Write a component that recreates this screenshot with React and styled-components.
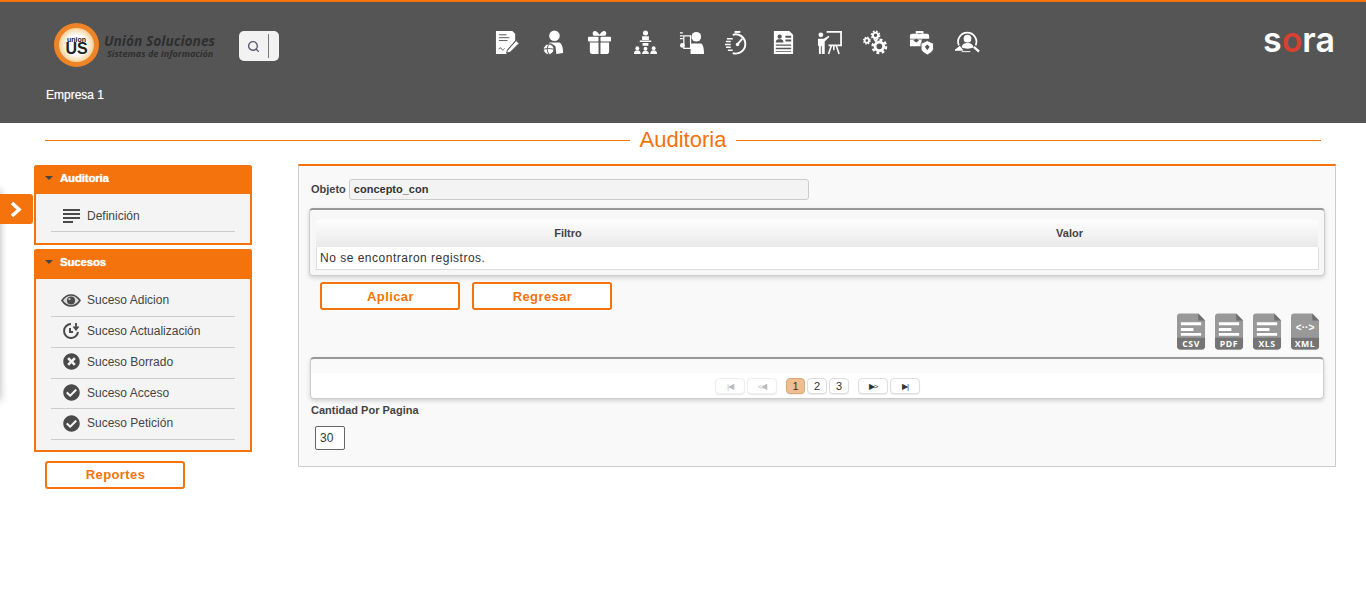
import React from 'react'
import styled, { createGlobalStyle } from 'styled-components'
import { FaCheckCircle, FaTimesCircle } from 'react-icons/fa'
import { Search } from 'lucide-react'

const orange = '#f4730d'

const GlobalStyle = createGlobalStyle`
  html, body {
    margin: 0;
    padding: 0;
    background: #fff;
    font-family: "Liberation Sans", Arial, sans-serif;
    overflow: hidden;
  }
`

const Page = styled.div`
  position: relative;
  width: 1366px;
  height: 612px;
  overflow: hidden;
`

const Header = styled.header`
  height: 121px;
  background: #555;
  border-top: 2px solid ${orange};
`

const HeaderTop = styled.div`
  display: flex;
  align-items: flex-start;
  height: 80px;
  padding: 0 31px 0 54px;
`

const Logo = styled.div`
  display: flex;
  align-items: center;
  width: 185px;
  height: 44px;
  margin-top: 21px;
`

const LogoBadge = styled.div`
  display: flex;
  flex: none;
  flex-direction: column;
  align-items: center;
  justify-content: center;
  width: 45px;
  height: 44px;
  box-sizing: border-box;
  border-radius: 50%;
  border: 5px solid #ee8427;
  background: radial-gradient(circle, #fff 40%, #f5cf94 72%, #fff 88%);
  color: #222;
  font-weight: bold;
  font-size: 16px;
  line-height: 12px;

  small {
    font-size: 7px;
    line-height: 7px;
  }
`

const LogoText = styled.div`
  margin: 2px 0 0 5px;
  color: #2f2f2f;
  font-family: "Open Sans", sans-serif;
  font-style: italic;
  font-weight: 700;
  font-size: 13.8px;
  line-height: 15px;
  white-space: nowrap;

  small {
    display: block;
    margin-left: 3px;
    font-size: 9.1px;
    line-height: 11px;
  }
`

const SearchBox = styled.div`
  display: flex;
  align-items: center;
  width: 40px;
  height: 30px;
  margin-top: 29px;
  box-sizing: border-box;
  padding-left: 8px;
  background: #f2f2f2;
  border-radius: 5px;
  color: #556;

  i {
    width: 1px;
    height: 24px;
    margin-left: 8px;
    background: #777;
  }
`

const IconNav = styled.nav`
  display: flex;
  margin-left: 205px;
  margin-top: 28px;
`

const NavSlot = styled.div`
  display: flex;
  justify-content: center;
  width: 46px;
  height: 28px;
`

const SoraMark = styled.svg`
  margin-left: auto;
  margin-top: 12px;
`

const CompanyName = styled.div`
  padding-left: 46px;
  margin-top: 6px;
  color: #fff;
  font-size: 12px;
  line-height: 14px;
  text-shadow: 0 0 1px rgba(255, 255, 255, 0.5);
`

const TitleRow = styled.div`
  display: flex;
  align-items: center;
  height: 35px;
  margin: 0 45px 6px;

  &::before, &::after {
    content: '';
    flex: 1;
    height: 1px;
    background: ${orange};
  }

  h1 {
    margin: 0 10px;
    color: ${orange};
    font-size: 22px;
    font-weight: normal;
    line-height: 33px;
    padding-bottom: 2px;
  }
`

const Content = styled.div`
  display: flex;
  align-items: flex-start;
  padding-left: 34px;
`

const Sidebar = styled.aside`
  width: 218px;
  margin-top: 1px;
  margin-right: 46px;
`

const MenuPanel = styled.section`
  box-sizing: border-box;
  margin-bottom: 4px;
  border: 2px solid ${orange};
  border-top: 0;
  border-radius: 3px 3px 0 0;
  background: #f4f4f4;
`

const MenuHead = styled.div`
  display: flex;
  align-items: center;
  height: ${p => p.$h}px;
  box-sizing: border-box;
  margin: 0 -2px;
  padding: 0 0 3px 11px;
  border-radius: 3px 3px 0 0;
  background: ${orange};
  color: #fff;
  font-size: 11.5px;
  font-weight: bold;
  letter-spacing: -0.2px;
  text-shadow: 0 0 1px #fff;

  &::before {
    content: '';
    width: 0;
    height: 0;
    margin-right: 7px;
    border-left: 4px solid transparent;
    border-right: 4px solid transparent;
    border-top: 4px solid #444;
  }
`

const MenuList = styled.div`
  padding: 7.7px 15px 10.3px;
`

const MenuRow = styled.div`
  display: flex;
  align-items: center;
  height: 30.75px;
  box-sizing: border-box;
  padding-bottom: 2px;
  border-bottom: 1px solid #ccc;
  color: #444;
  font-size: 12px;
`

const MenuIcon = styled.span`
  display: flex;
  justify-content: center;
  align-items: center;
  box-sizing: border-box;
  width: 36px;
  height: 18px;
  padding-left: 4px;
  color: #4a4a4a;
  font-size: 17px;
`

const OutlineButton = styled.button`
  width: 140px;
  height: 28px;
  padding: 0 0 0 1px;
  background: #fff;
  border: 2px solid ${orange};
  border-radius: 3px;
  color: ${orange};
  font-family: inherit;
  font-size: 13px;
  font-weight: bold;
  letter-spacing: 0.4px;
`

const ReportButton = styled(OutlineButton)`
  display: block;
  margin: 8.5px 0 0 11px;
`

const MainPanel = styled.main`
  width: 1038px;
  box-sizing: border-box;
  padding: 13px 10px 16px;
  background: #f9f9f9;
  border: 1px solid #ccc;
  border-top: 2px solid ${orange};
`

const FieldRow = styled.div`
  display: flex;
  align-items: center;
  padding-left: 2px;
`

const FieldLabel = styled.label`
  margin-right: 3px;
  padding-bottom: 1px;
  color: #444;
  font-size: 11px;
  font-weight: bold;
`

const ReadOnlyInput = styled.div`
  display: flex;
  align-items: center;
  width: 460px;
  height: 21px;
  box-sizing: border-box;
  padding: 0 0 1px 4px;
  background: #f3f3f3;
  border: 1px solid #ccc;
  border-radius: 3px;
  color: #333;
  font-size: 11px;
  font-weight: bold;
`

const GridBox = styled.div`
  box-sizing: border-box;
  height: ${p => p.$h}px;
  margin: ${p => p.$m};
  padding: ${p => p.$pad};
  background: linear-gradient(#fafafa 14px, #fff 14px);
  border: 1px solid #ccc;
  border-top: 2px solid #999;
  border-radius: 4px;
  box-shadow: 0 2px 4px rgba(0, 0, 0, 0.16);
`

const FilterBox = styled(GridBox)`
  background: #f7f7f7;
`

const GridHead = styled.div`
  display: grid;
  grid-template-columns: 504px 499px;
  height: 27px;
  background: linear-gradient(#fdfdfd, #e9e9e9);
  color: #444;
  font-size: 11px;
  font-weight: bold;

  span {
    display: flex;
    align-items: center;
    justify-content: center;
    padding-bottom: 2px;
  }
`

const GridEmpty = styled.div`
  display: flex;
  align-items: center;
  width: 1003px;
  height: 23px;
  box-sizing: border-box;
  padding-left: 3px;
  background: #fff;
  border: 1px solid #ddd;
  border-top: 0;
  color: #333;
  font-size: 12px;
  letter-spacing: 0.5px;
`

const ButtonRow = styled.div`
  display: flex;
  gap: 12px;
  margin: 6px 0 0 11px;
`

const ExportRow = styled.div`
  display: flex;
  justify-content: flex-end;
  gap: 9px;
  height: 37px;
  margin: 3px 5px 0 0;
`

const Pager = styled.div`
  display: flex;
  align-items: flex-start;
  padding: 19px 0 0 404px;
`

const PageButton = styled.div`
  display: flex;
  align-items: center;
  justify-content: center;
  width: ${p => p.$w}px;
  height: 16px;
  margin-left: ${p => p.$gap}px;
  box-sizing: border-box;
  background: ${p => (p.$active ? '#f0bd8f' : '#fff')};
  border: 1px solid ${p => (p.$active ? '#d9a878' : p.$off ? '#eee' : '#ddd')};
  border-radius: 4px;
  box-shadow: 0 1px 1px rgba(0, 0, 0, 0.08);
  color: ${p => (p.$off ? '#bbb' : '#333')};
  font-size: ${p => (p.$num ? 11 : 8)}px;
  letter-spacing: ${p => (p.$num ? 0 : -1)}px;
`

const SizeLabel = styled.div`
  margin: 5px 0 0 2px;
  color: #444;
  font-size: 11px;
  font-weight: bold;
  line-height: 12px;
`

const SizeInput = styled.div`
  display: flex;
  align-items: center;
  width: 30px;
  height: 24px;
  margin: 10px 0 0 6px;
  box-sizing: border-box;
  padding-left: 4px;
  background: #fff;
  border: 1px solid #666;
  border-radius: 2px;
  color: #333;
  font-size: 12px;
`

const SideTab = styled.div`
  position: absolute;
  left: 0;
  top: 194px;
  display: flex;
  align-items: center;
  justify-content: center;
  width: 33px;
  height: 30px;
  padding-right: 2px;
  box-sizing: border-box;
  background: ${orange};
  border-radius: 0 3px 3px 0;
`

const HiddenDrawer = styled.div`
  position: absolute;
  left: -200px;
  top: 190px;
  width: 200px;
  height: 210px;
  box-shadow: 0 0 8px rgba(0, 0, 0, 0.3);
`

const Ico = ({ children }) => (
  <svg width={25} height={25} viewBox='0 0 26 26' fill='#fff'>{children}</svg>
)

const dark = '#555'

const navIcons = [
  // documento con lapiz
  <Ico key='doc'>
    <path d='M1 1h17l3 3v7l-8 9-1 5H1z' />
    <path d='M4 5h8M4 8h11M4 11h9M4 20c1-2 2-2 3 0s2 0 3-1' stroke={dark} fill='none' strokeWidth='1' />
    <path d='M13 21l9-10 3 3-9 9-4 1z' stroke={dark} strokeWidth='1' />
  </Ico>,
  // persona con bola
  <Ico key='person'>
    <circle cx='14' cy='6' r='5.5' />
    <path d='M9 13h10c3 1 4 6 4 11l-7 1-1-8-4-3-3 0z' />
    <circle cx='8' cy='20' r='5.500' stroke={dark} strokeWidth='1' />
    <path d='M8 15c-2 3-2 7 0 10M3 20c3-1 6-1 10 0' stroke={dark} strokeWidth='1' fill='none' />
  </Ico>,
  // regalo
  <Ico key='gift'>
    <path d='M8 1c2 0 4 2 5 4 1-2 3-4 5-4s3 3 1 5H7C5 4 6 1 8 1z' />
    <rect x='1' y='7' width='11' height='5' rx='1' />
    <rect x='14' y='7' width='11' height='5' rx='1' />
    <path d='M3 13h9v12H5c-1 0-2-1-2-2zM14 13h9v10c0 1-1 2-2 2h-7z' />
  </Ico>,
  // presentador y audiencia
  <Ico key='speaker'>
    <circle cx='13' cy='3' r='2.600' />
    <path d='M9.500 6.500h7v4h-7zM7 11h12v1.500H7zM10 13.500h6v3h-6z' />
    <circle cx='4.500' cy='19' r='2' />
    <circle cx='13' cy='19.500' r='2' />
    <circle cx='21.500' cy='19' r='2' />
    <path d='M1 25c0-3 1.500-4 3.500-4S8 22 8 25zM9.500 25c0-2.500 1.500-3.500 3.500-3.500s3.500 1 3.500 3.500zM18 25c0-3 1.500-4 3.500-4s3.500 1 3.500 4z' />
  </Ico>,
  // persona con documento
  <Ico key='client'>
    <circle cx='18' cy='7' r='5' />
    <path d='M13 14h10c2 1 3 5 3 11H12V15z' />
    <path d='M5 6h7v13H5z' fill='none' stroke='#fff' strokeWidth='1.300' />
    <circle cx='3.500' cy='16' r='2.500' />
    <path d='M1 3h3M1 6h3M1 9h3' stroke='#fff' strokeWidth='1.300' />
  </Ico>,
  // cronometro
  <Ico key='watch'>
    <path d='M10 1h6v2h-6z' />
    <path d='M8 5a10 10 0 1 1 0 19' fill='none' stroke='#fff' strokeWidth='2' />
    <path d='M13 15l5-6' stroke='#fff' strokeWidth='2' />
    <path d='M2 9h6M1 12h5M0 15h6M1 18h5M3 21h5' stroke='#fff' strokeWidth='1.500' />
    <circle cx='13' cy='15' r='1.800' />
  </Ico>,
  // ficha
  <Ico key='sheet'>
    <path d='M3 1h16l4 4v20H3z' />
    <circle cx='9' cy='7' r='2.200' fill={dark} />
    <path d='M5 13c0-3 2-3.500 4-3.500s4 .5 4 3.500zM15 6h6v2h-6zM15 10h6v2h-6zM5 15h16v1.500H5zM5 18.500h16V20H5zM5 22h16v1H5z' fill={dark} />
  </Ico>,
  // pizarra
  <Ico key='board'>
    <circle cx='4' cy='5' r='2.500' />
    <path d='M1 9h6l5-3 1 1-5 5v13H5v-8H4v8H2v-8l-1-1z' />
    <path d='M10 2h15v14H12' fill='none' stroke='#fff' strokeWidth='1.800' />
    <path d='M15 16l-3 9M20 16l3 9M17.500 16v5' stroke='#fff' strokeWidth='1.600' />
  </Ico>,
  // engranajes
  <Ico key='gears'>
    <g fill='none' stroke='#fff'>
      <circle cx='17' cy='17' r='4.500' strokeWidth='3' />
      <circle cx='17' cy='17' r='7' strokeWidth='2.500' strokeDasharray='3 2.500' />
      <circle cx='13' cy='5.500' r='2.800' strokeWidth='2' />
      <circle cx='13' cy='5.500' r='4.300' strokeWidth='1.500' strokeDasharray='1.800 1.580' />
      <circle cx='4' cy='11' r='2.300' strokeWidth='1.800' />
      <circle cx='4' cy='11' r='3.500' strokeWidth='1.300' strokeDasharray='1.500 1.250' />
    </g>
  </Ico>,
  // maletin con escudo
  <Ico key='case'>
    <path d='M7 4V1h8v3h-2V3H9v1z' />
    <path d='M1 6c0-1 1-2 2-2h16c1 0 2 1 2 2v3H1z' />
    <path d='M1 10h13l-1 1v6H1z' />
    <path d='M7.500 9l3 2-3 2-3-2z' fill={dark} />
    <path d='M19 11l6.500 3v5c0 3-3 5-6.500 7-3.500-2-6.500-4-6.500-7v-5z' stroke={dark} strokeWidth='1' />
    <path d='M19 15l2.500 2.500L19 21l-2.500-3.500z' fill={dark} />
  </Ico>,
  // busqueda de persona
  <Ico key='audit'>
    <path d='M4 16a9.500 9.500 0 1 1 17.500 0' fill='none' stroke='#fff' strokeWidth='1.800' />
    <circle cx='13' cy='9' r='4' />
    <path d='M7 18c0-3 3-4.500 6-4.500s6 1.500 6 4.500c-3 2-9 2-12 0z' />
    <path d='M19.500 17.500l5.500 5' stroke='#fff' strokeWidth='2.500' />
    <path d='M0 21l5-4 3 4zM7 22.500h9' stroke='#fff' strokeWidth='1' />
  </Ico>,
]

const LinesIcon = () => (
  <svg width='17' height='14' viewBox='0 0 17 14' fill='#4a4a4a'>
    <path d='M0 0h17v2H0zM0 4h17v2H0zM0 8h17v2H0zM0 12h10v2H0z' />
  </svg>
)

const EyeIcon = () => (
  <svg width='20' height='13' viewBox='0 0 20 13'>
    <path d='M1 6.500C4 2 7 1 10 1s6 1 9 5.500C16 11 13 12 10 12S4 11 1 6.500z' fill='#d8d8d8' stroke='#4a4a4a' strokeWidth='1.600' />
    <circle cx='10' cy='6.500' r='4' fill='#4a4a4a' />
    <circle cx='8.500' cy='5' r='1.200' fill='#bbb' />
  </svg>
)

const ClockIcon = () => (
  <svg width='18' height='18' viewBox='0 0 18 18' fill='none' stroke='#4a4a4a' strokeWidth='2'>
    <path d='M9 2a7 7 0 1 0 7 8' />
    <path d='M8 6v4h3' />
    <path d='M14 1v6M11.500 4.500L14 7.500l2.500-3' strokeWidth='1.800' />
  </svg>
)

const ChevronIcon = () => (
  <svg width='12' height='17' viewBox='0 0 12 17' fill='none' stroke='#fff' strokeWidth='3.600'>
    <path d='M2 2l7 6.500L2 15' />
  </svg>
)

const FileIcon = ({ label, code }) => (
  <svg width='29' height='37' viewBox='0 0 30 37'>
    <path d='M3 0h19l7 7v27c0 1.600-1.400 3-3 3H3c-1.600 0-3-1.400-3-3V3c0-1.600 1.400-3 3-3z' fill='#999' />
    <path d='M22 0l7 7h-7z' fill='#6f6f6f' />
    <path d='M0 25h29v9c0 1.600-1.400 3-3 3H3c-1.600 0-3-1.400-3-3z' fill='#757575' />
    {code
      ? <text x='14.500' y='18' fill='#fff' fontFamily='"Liberation Sans", sans-serif' fontSize='10.500' fontWeight='bold' textAnchor='middle'>{'<··>'}</text>
      : <path d='M4 9h21v3H4zM4 15h13v3H4zM4 20h21v3H4z' fill='#fff' />}
    <text x='14.500' y='34.500' fill='#fff' fontFamily='"Open Sans", sans-serif' fontSize='9' fontWeight='bold' textAnchor='middle' letterSpacing='0.6'>{label}</text>
  </svg>
)

const menus = [
  { title: 'Auditoria', headHeight: 29, items: [{ icon: <LinesIcon />, label: 'Definición' }] },
  {
    title: 'Sucesos',
    headHeight: 30,
    items: [
      { icon: <EyeIcon />, label: 'Suceso Adicion' },
      { icon: <ClockIcon />, label: 'Suceso Actualización' },
      { icon: <FaTimesCircle />, label: 'Suceso Borrado' },
      { icon: <FaCheckCircle />, label: 'Suceso Acceso' },
      { icon: <FaCheckCircle />, label: 'Suceso Petición' },
    ],
  },
]

const pages = [
  { label: '|◀', w: 30, gap: 0, off: true },
  { label: '<◀', w: 30, gap: 2, off: true },
  { label: '1', w: 19, gap: 9, active: true, num: true },
  { label: '2', w: 20, gap: 2, num: true },
  { label: '3', w: 20, gap: 2, num: true },
  { label: '▶>', w: 30, gap: 9 },
  { label: '▶|', w: 30, gap: 2 },
]

const App = () => (
  <Page>
    <GlobalStyle />
    <Header>
      <HeaderTop>
        <Logo>
          <LogoBadge><small>union</small>US</LogoBadge>
          <LogoText>
            Unión Soluciones
            <small>Sistemas de Información</small>
          </LogoText>
        </Logo>
        <SearchBox>
          <Search size={13} strokeWidth={2.5} />
          <i />
        </SearchBox>
        <IconNav>
          {navIcons.map((icon, i) => <NavSlot key={i}>{icon}</NavSlot>)}
        </IconNav>
        <SoraMark width='72' height='50' viewBox='0 0 72 50'>
          <text y='38' fontFamily='Inter, sans-serif' fontSize='35' fontWeight='600' fill='#fff' textLength='72' lengthAdjust='spacingAndGlyphs'>
            s<tspan fill='#d8402f'>o</tspan>ra
          </text>
        </SoraMark>
      </HeaderTop>
      <CompanyName>Empresa 1</CompanyName>
    </Header>
    <TitleRow><h1>Auditoria</h1></TitleRow>
    <Content>
      <Sidebar>
        {menus.map(menu => (
          <MenuPanel key={menu.title}>
            <MenuHead $h={menu.headHeight}>{menu.title}</MenuHead>
            <MenuList>
              {menu.items.map(item => (
                <MenuRow key={item.label}>
                  <MenuIcon>{item.icon}</MenuIcon>
                  {item.label}
                </MenuRow>
              ))}
            </MenuList>
          </MenuPanel>
        ))}
        <ReportButton>Reportes</ReportButton>
      </Sidebar>
      <MainPanel>
        <FieldRow>
          <FieldLabel>Objeto</FieldLabel>
          <ReadOnlyInput>concepto_con</ReadOnlyInput>
        </FieldRow>
        <FilterBox $h={68} $m='8px 0 0' $pad='10px 6px 0'>
          <GridHead><span>Filtro</span><span>Valor</span></GridHead>
          <GridEmpty>No se encontraron registros.</GridEmpty>
        </FilterBox>
        <ButtonRow>
          <OutlineButton>Aplicar</OutlineButton>
          <OutlineButton>Regresar</OutlineButton>
        </ButtonRow>
        <ExportRow>
          <FileIcon label='CSV' />
          <FileIcon label='PDF' />
          <FileIcon label='XLS' />
          <FileIcon label='XML' code />
        </ExportRow>
        <GridBox $h={42} $m='7px 1px 0' $pad='0'>
          <Pager>
            {pages.map(p => (
              <PageButton key={p.label} $w={p.w} $gap={p.gap} $off={p.off} $active={p.active} $num={p.num}>{p.label}</PageButton>
            ))}
          </Pager>
        </GridBox>
        <SizeLabel>Cantidad Por Pagina</SizeLabel>
        <SizeInput>30</SizeInput>
      </MainPanel>
    </Content>
    <HiddenDrawer />
    <SideTab><ChevronIcon /></SideTab>
  </Page>
)

export default App
